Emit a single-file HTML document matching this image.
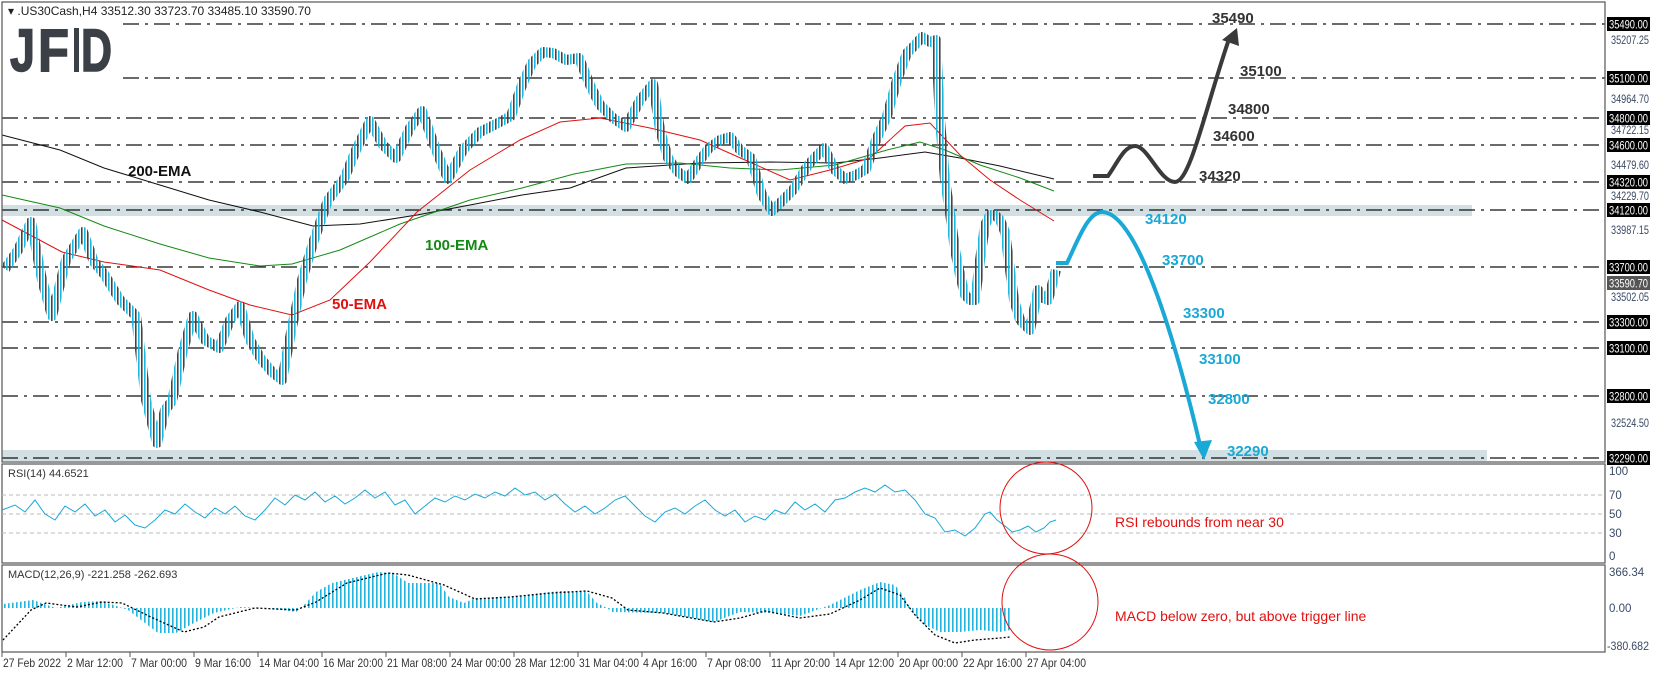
<!DOCTYPE html>
<html><head><meta charset="utf-8"><style>
html,body{margin:0;padding:0;background:#fff;}
svg{display:block;font-family:"Liberation Sans",sans-serif;}
.ax{font-size:11.5px;fill:#3a4a66;}
.bx{font-size:11.5px;fill:#fff;}
.lv{font-size:15px;font-weight:bold;fill:#333;}
.lc{font-size:15px;font-weight:bold;fill:#1aa8d6;}
.tl{font-size:12px;fill:#333;}
</style></head><body>
<svg width="1655" height="673" viewBox="0 0 1655 673" xmlns="http://www.w3.org/2000/svg">
<defs>
<pattern id="hb" width="4" height="10" patternUnits="userSpaceOnUse"><rect x="0" y="0" width="1.6" height="10" fill="#22b4dc"/></pattern>
<pattern id="cp" width="6" height="10" patternUnits="userSpaceOnUse"><rect x="0" y="0" width="1.6" height="10" fill="#1cb6de"/><rect x="3" y="0" width="1.6" height="10" fill="#444"/></pattern>
</defs>
<rect width="1655" height="673" fill="#fff"/>
<rect x="2" y="205" width="1470" height="11" fill="#d2dfe3"/>
<rect x="2" y="450" width="1485" height="11" fill="#d2dfe3"/>
<g stroke="#111" stroke-width="1.2" stroke-dasharray="16 6 3 6" fill="none">
<path d="M123 24H1605M123 78H1605M2 118H1605M2 145H1605M2 182H1605M2 210H1605M2 267H1605M2 322H1605M2 348H1605M2 396H1605M2 458H1605"/>
</g>
<!-- logo -->
<g fill="#3b4047" stroke="#3b4047" stroke-width="1.5" font-weight="bold" font-size="60">
<text x="10" y="71" textLength="25" lengthAdjust="spacingAndGlyphs">J</text>
<text x="38" y="71" textLength="31" lengthAdjust="spacingAndGlyphs">F</text>
<text x="81" y="71" textLength="31" lengthAdjust="spacingAndGlyphs">D</text>
</g>
<rect x="74" y="28" width="5" height="44" fill="#3b4047"/>
<text x="8" y="15" font-size="12" fill="#222">▾ .US30Cash,H4  33512.30 33723.70 33485.10 33590.70</text>
<!-- EMAs -->
<polyline fill="none" stroke="#111" stroke-width="1" points="2,135 60,150 104,168 150,182 209,200 260,212 313,226 360,224 417,215 470,205 522,195 570,188 626,168 700,163 770,162 835,163 880,158 925,152 960,158 1000,166 1054,179"/>
<polyline fill="none" stroke="#138a13" stroke-width="1" points="2,195 60,208 104,226 160,244 209,258 260,266 292,264 340,250 400,224 470,200 522,188 574,174 626,164 680,163 730,168 780,170 835,165 887,150 920,142 945,150 980,165 1020,178 1054,191"/>
<polyline fill="none" stroke="#e01010" stroke-width="1" points="2,220 62,252 104,262 160,270 209,290 250,305 292,315 330,300 370,262 417,212 470,170 520,140 560,122 600,118 650,128 700,140 745,160 790,180 830,170 870,158 905,126 930,123 960,155 990,180 1020,200 1054,221"/>
<!-- price candles approximation -->
<polyline fill="none" stroke="url(#cp)" stroke-width="10" stroke-linejoin="round" points="5,269 18,250 31,222 42,280 52,316 66,260 83,232 94,262 104,274 120,300 136,316 146,400 157,443 165,410 172,401 183,350 193,316 205,340 219,348 230,320 240,306 250,340 261,359 272,372 282,380 292,327 302,280 313,243 328,200 344,179 356,150 370,121 383,145 396,158 410,128 422,111 436,150 448,179 463,150 480,132 496,124 511,116 522,85 532,63 543,52 553,53 566,60 579,58 590,85 600,105 613,118 626,127 640,100 653,84 660,130 668,158 678,172 688,179 700,160 709,148 720,140 730,137 740,150 751,158 762,195 772,211 783,200 793,190 808,165 824,148 835,170 845,179 856,175 866,169 876,140 887,116 897,80 907,53 915,45 922,37 930,42 936,40 940,120 945,180 951,220 955,250 960,275 965,295 970,300 975,300 980,260 985,225 990,215 995,215 1000,220 1005,232 1010,270 1014,300 1020,320 1025,325 1030,330 1035,305 1038,290 1043,298 1048,300 1052,285 1056,270"/>
<text x="128" y="176" font-size="15" font-weight="bold" fill="#111">200-EMA</text>
<text x="425" y="250" font-size="15" font-weight="bold" fill="#138a13">100-EMA</text>
<text x="332" y="309" font-size="15" font-weight="bold" fill="#e01010">50-EMA</text>
<!-- scenario arrows -->
<path d="M1093 176 H1108 C1118 162 1124 146 1135 146 C1148 146 1160 182 1175 182 C1190 182 1205 110 1228 42" fill="none" stroke="#3a3a3a" stroke-width="4"/>
<polygon points="1237,28 1239,46 1222,40" fill="#3a3a3a"/>
<path d="M1056 263 H1067 C1078 240 1088 212 1102 212 C1140 212 1180 360 1200 445" fill="none" stroke="#1aa8d6" stroke-width="4"/>
<polygon points="1204,460 1194,442 1212,440" fill="#1aa8d6"/>
<text class="lv" x="1212" y="23">35490</text>
<text class="lv" x="1240" y="76">35100</text>
<text class="lv" x="1228" y="114">34800</text>
<text class="lv" x="1213" y="141">34600</text>
<text class="lv" x="1199" y="181">34320</text>
<text class="lc" x="1145" y="224">34120</text>
<text class="lc" x="1162" y="265">33700</text>
<text class="lc" x="1183" y="318">33300</text>
<text class="lc" x="1199" y="364">33100</text>
<text class="lc" x="1208" y="404">32800</text>
<text class="lc" x="1227" y="456">32290</text>
<g fill="none" stroke="#555" stroke-width="1.2">
<rect x="2" y="2" width="1603" height="460"/>
<rect x="2" y="464" width="1603" height="99"/>
<rect x="2" y="565" width="1603" height="87"/>
</g>
<g class="ax">
<text x="1611" y="44" textLength="38" lengthAdjust="spacingAndGlyphs">35207.25</text>
<text x="1611" y="103" textLength="38" lengthAdjust="spacingAndGlyphs">34964.70</text>
<text x="1611" y="134" textLength="38" lengthAdjust="spacingAndGlyphs">34722.15</text>
<text x="1611" y="169" textLength="38" lengthAdjust="spacingAndGlyphs">34479.60</text>
<text x="1611" y="200" textLength="38" lengthAdjust="spacingAndGlyphs">34229.70</text>
<text x="1611" y="234" textLength="38" lengthAdjust="spacingAndGlyphs">33987.15</text>
<text x="1611" y="301" textLength="38" lengthAdjust="spacingAndGlyphs">33502.05</text>
<text x="1611" y="427" textLength="38" lengthAdjust="spacingAndGlyphs">32524.50</text>
</g>
<g fill="#000">
<rect x="1607" y="17" width="43" height="14"/><rect x="1607" y="71" width="43" height="14"/>
<rect x="1607" y="111" width="43" height="14"/><rect x="1607" y="138" width="43" height="14"/>
<rect x="1607" y="175" width="43" height="14"/><rect x="1607" y="203" width="43" height="14"/>
<rect x="1607" y="260" width="43" height="14"/><rect x="1607" y="315" width="43" height="14"/>
<rect x="1607" y="341" width="43" height="14"/><rect x="1607" y="389" width="43" height="14"/>
<rect x="1607" y="451" width="43" height="14"/>
</g>
<rect x="1607" y="276" width="43" height="14" fill="#555"/>
<g class="bx">
<text x="1609" y="28.5" textLength="39" lengthAdjust="spacingAndGlyphs">35490.00</text><text x="1609" y="82.5" textLength="39" lengthAdjust="spacingAndGlyphs">35100.00</text>
<text x="1609" y="122.5" textLength="39" lengthAdjust="spacingAndGlyphs">34800.00</text><text x="1609" y="149.5" textLength="39" lengthAdjust="spacingAndGlyphs">34600.00</text>
<text x="1609" y="186.5" textLength="39" lengthAdjust="spacingAndGlyphs">34320.00</text><text x="1609" y="214.5" textLength="39" lengthAdjust="spacingAndGlyphs">34120.00</text>
<text x="1609" y="271.5" textLength="39" lengthAdjust="spacingAndGlyphs">33700.00</text><text x="1609" y="287.5" textLength="39" lengthAdjust="spacingAndGlyphs">33590.70</text>
<text x="1609" y="326.5" textLength="39" lengthAdjust="spacingAndGlyphs">33300.00</text><text x="1609" y="352.5" textLength="39" lengthAdjust="spacingAndGlyphs">33100.00</text>
<text x="1609" y="400.5" textLength="39" lengthAdjust="spacingAndGlyphs">32800.00</text><text x="1609" y="462.5" textLength="39" lengthAdjust="spacingAndGlyphs">32290.00</text>
</g>
<!-- RSI -->
<text x="8" y="477" font-size="11" fill="#333">RSI(14) 44.6521</text>
<g stroke="#bbb" stroke-dasharray="4 3" stroke-width="1"><path d="M2 495H1605M2 514H1605M2 533H1605"/></g>
<g class="ax"><text x="1609" y="475">100</text><text x="1609" y="499">70</text><text x="1609" y="518">50</text><text x="1609" y="537">30</text><text x="1609" y="560">0</text></g>
<polyline fill="none" stroke="#1aa8d6" stroke-width="1" points="2,510 15,505 25,512 35,500 45,514 55,520 65,506 75,512 85,504 95,516 105,510 115,522 125,515 135,525 145,528 155,520 165,510 175,514 185,504 195,512 205,518 215,508 225,514 235,506 245,516 255,520 265,510 275,498 285,505 295,495 305,500 315,492 325,502 335,496 345,504 355,498 365,490 375,498 385,492 395,505 405,500 415,514 425,506 435,498 445,502 455,496 465,500 475,494 485,498 495,492 505,496 515,488 525,495 535,492 545,500 555,494 565,504 575,512 585,506 595,514 605,508 615,500 625,496 635,506 645,516 655,522 665,512 675,508 685,514 695,506 705,500 715,510 725,516 735,510 745,522 755,516 765,520 775,510 785,514 795,502 805,510 815,504 825,512 835,500 845,498 855,492 865,488 875,492 885,485 895,492 905,490 915,500 925,514 935,518 945,532 955,530 965,536 975,528 985,514 990,512 997,520 1005,526 1012,532 1020,530 1028,526 1036,532 1044,528 1050,522 1056,520"/>
<circle cx="1046" cy="508" r="46" fill="none" stroke="#e01010" stroke-width="1"/>
<text x="1115" y="527" font-size="14" fill="#e01010">RSI rebounds from near 30</text>
<!-- MACD -->
<text x="8" y="578" font-size="11" fill="#333">MACD(12,26,9) -221.258 -262.693</text>
<polygon fill="url(#hb)" points="3,608 3,604 33,600 56,608 82,602 102,601 128,610 158,633 176,633 194,623 214,613 240,607 265,608 296,612 306,603 316,592 332,583 357,577 378,572 393,573 408,583 439,583 449,597 464,603 475,598 510,597 541,593 561,591 587,592 597,603 607,608 612,612 663,613 714,622 740,612 776,613 800,616 830,605 860,590 880,582 895,585 905,598 912,612 925,625 940,632 960,632 980,630 1000,632 1010,630 1010,608"/>
<polyline fill="none" stroke="#000" stroke-width="1.3" stroke-dasharray="2 2" points="3,640 31,610 46,603 77,607 102,602 122,603 153,618 184,632 204,627 219,617 255,608 296,610 316,602 347,583 388,573 408,575 444,585 475,599 510,597 551,593 587,591 612,598 628,610 663,613 714,622 740,618 765,611 800,618 830,614 860,600 880,588 900,595 915,615 935,635 955,643 975,640 1000,638 1010,637"/>
<g class="ax"><text x="1609" y="576">366.34</text><text x="1609" y="612">0.00</text><text x="1607" y="650" textLength="42" lengthAdjust="spacingAndGlyphs">-380.682</text></g>
<circle cx="1050" cy="602" r="48" fill="none" stroke="#e01010" stroke-width="1"/>
<text x="1115" y="621" font-size="14" fill="#e01010">MACD below zero, but above trigger line</text>
<!-- time axis -->
<g stroke="#555"><path d="M2 652v5M66 652v5M130 652v5M194 652v5M258 652v5M322 652v5M386 652v5M450 652v5M514 652v5M578 652v5M642 652v5M706 652v5M770 652v5M834 652v5M898 652v5M962 652v5M1026 652v5"/></g>
<g class="tl">
<text x="3" y="667" textLength="58" lengthAdjust="spacingAndGlyphs">27 Feb 2022</text>
<text x="67" y="667" textLength="56" lengthAdjust="spacingAndGlyphs">2 Mar 12:00</text>
<text x="131" y="667" textLength="56" lengthAdjust="spacingAndGlyphs">7 Mar 00:00</text>
<text x="195" y="667" textLength="56" lengthAdjust="spacingAndGlyphs">9 Mar 16:00</text>
<text x="259" y="667" textLength="60" lengthAdjust="spacingAndGlyphs">14 Mar 04:00</text>
<text x="323" y="667" textLength="60" lengthAdjust="spacingAndGlyphs">16 Mar 20:00</text>
<text x="387" y="667" textLength="60" lengthAdjust="spacingAndGlyphs">21 Mar 08:00</text>
<text x="451" y="667" textLength="60" lengthAdjust="spacingAndGlyphs">24 Mar 00:00</text>
<text x="515" y="667" textLength="60" lengthAdjust="spacingAndGlyphs">28 Mar 12:00</text>
<text x="579" y="667" textLength="60" lengthAdjust="spacingAndGlyphs">31 Mar 04:00</text>
<text x="643" y="667" textLength="54" lengthAdjust="spacingAndGlyphs">4 Apr 16:00</text>
<text x="707" y="667" textLength="54" lengthAdjust="spacingAndGlyphs">7 Apr 08:00</text>
<text x="771" y="667" textLength="59" lengthAdjust="spacingAndGlyphs">11 Apr 20:00</text>
<text x="835" y="667" textLength="59" lengthAdjust="spacingAndGlyphs">14 Apr 12:00</text>
<text x="899" y="667" textLength="59" lengthAdjust="spacingAndGlyphs">20 Apr 00:00</text>
<text x="963" y="667" textLength="59" lengthAdjust="spacingAndGlyphs">22 Apr 16:00</text>
<text x="1027" y="667" textLength="59" lengthAdjust="spacingAndGlyphs">27 Apr 04:00</text>
</g>
</svg>
</body></html>
